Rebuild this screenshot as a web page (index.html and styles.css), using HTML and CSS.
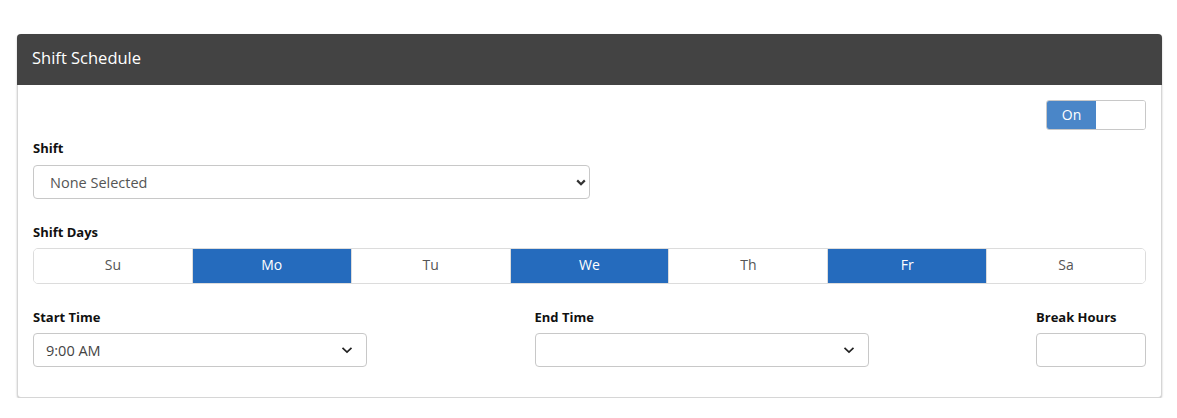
FILE: index.html
```html
<!DOCTYPE html>
<html lang="en">
<head>
    <meta charset="UTF-8">
    <meta name="viewport" content="width=device-width, initial-scale=1.0">
    <title>Shift Schedule</title>
    <link rel="stylesheet" href="styles.css">
</head>
<body>
<div class="card">
    <div class="card-header">Shift Schedule</div>
    <div class="card-body">
        <!-- on / off toggle -->
        <div class="toggle-row">
            <div class="toggle">
                <span class="toggle-on">On</span>
                <span class="toggle-off"></span>
            </div>
        </div>

        <label class="field-label">Shift</label>
        <div class="select-wrap shift-select">
            <select class="form-select">
                <option>None Selected</option>
            </select>
            <svg class="caret caret-bold" width="10" height="7" viewBox="0 0 10 7"><path d="M1.2 1.4 L5 5.2 L8.8 1.4" fill="none" stroke="#333" stroke-width="2.2"/></svg>
        </div>

        <label class="field-label days-label">Shift Days</label>
        <div class="days">
            <button class="day">Su</button>
            <button class="day active">Mo</button>
            <button class="day">Tu</button>
            <button class="day active">We</button>
            <button class="day">Th</button>
            <button class="day active">Fr</button>
            <button class="day">Sa</button>
        </div>

        <div class="time-row">
            <div class="time-col">
                <label class="field-label">Start Time</label>
                <div class="select-wrap">
                    <select class="form-select time-select">
                        <option>9:00 AM</option>
                    </select>
                    <svg class="caret" width="12" height="8" viewBox="0 0 12 8"><path d="M1.5 1.8 L6 6 L10.5 1.8" fill="none" stroke="#222" stroke-width="1.7"/></svg>
                </div>
            </div>
            <div class="time-col">
                <label class="field-label">End Time</label>
                <div class="select-wrap">
                    <select class="form-select time-select">
                        <option></option>
                    </select>
                    <svg class="caret" width="12" height="8" viewBox="0 0 12 8"><path d="M1.5 1.8 L6 6 L10.5 1.8" fill="none" stroke="#222" stroke-width="1.7"/></svg>
                </div>
            </div>
            <div class="break-col">
                <label class="field-label">Break Hours</label>
                <input type="text" class="form-input">
            </div>
        </div>
    </div>
</div>
</body>
</html>
```

FILE: styles.css
```css
body {
    margin: 0;
    padding: 34px 15px 0 17px;
    background-color: #fff;
    font-family: "Open Sans", Arial, sans-serif;
    color: #222;
}

.card {
    border: 1px solid #d6d6d6;
    border-top: none;
    border-radius: 4px;
    box-shadow: 0 1px 2px rgba(0, 0, 0, 0.25);
    background: #fff;
}

.card-header {
    height: 51px;
    line-height: 47px;
    background-color: #434343;
    color: #fff;
    font-size: 16.5px;
    padding: 0 15px;
    border-radius: 4px 4px 0 0;
    margin: 0 -1px;
}

.card-body {
    padding: 15px 15px 30px 15px;
}

.toggle-row {
    display: flex;
    justify-content: flex-end;
    height: 30px;
    margin-bottom: 8px;
}

.toggle {
    display: flex;
    width: 98px;
    height: 28px;
    border: 1px solid #c8c8c8;
    border-radius: 3px;
    overflow: hidden;
}

.toggle-on {
    width: 49px;
    background-color: #4a86c8;
    color: #fff;
    font-size: 14px;
    text-align: center;
    line-height: 28px;
}

.toggle-off {
    flex: 1;
    background: #fff;
}

.field-label {
    display: block;
    font-size: 13px;
    font-weight: 700;
    color: #111;
    line-height: 20px;
    margin-bottom: 7px;
    margin-top: 1px;
}

.days-label {
    margin-top: 23px;
    margin-bottom: 6px;
}

.select-wrap {
    position: relative;
}

.shift-select {
    width: 557px;
}

.form-select {
    appearance: none;
    -webkit-appearance: none;
    display: block;
    width: 100%;
    height: 34px;
    border: 1px solid #c8c8c8;
    border-radius: 4px;
    background: #fff;
    color: #555;
    font-family: inherit;
    font-size: 14.5px;
    padding: 0 16px;
    outline: none;
}

.time-select {
    padding: 0 12px;
    color: #444;
}

.caret {
    position: absolute;
    top: 14px;
    right: 4px;
    pointer-events: none;
}

.select-wrap .caret:not(.caret-bold) {
    right: 14px;
    top: 13px;
}

.days {
    box-sizing: border-box;
    display: flex;
    height: 36px;
    border: 1px solid #dcdcdc;
    border-radius: 5px;
    overflow: hidden;
}

.day {
    flex: 1;
    border: none;
    border-left: 1px solid #dcdcdc;
    background: #fff;
    color: #555;
    font-family: inherit;
    font-size: 14px;
    padding: 0 0 3px 0;
}

.day:first-child {
    border-left: none;
}

.day.active {
    background-color: #256bbd;
    color: #fff;
}

.time-row {
    display: flex;
    justify-content: space-between;
    margin-top: 22px;
}

.time-row .field-label {
    margin-bottom: 6px;
}

.time-col {
    width: 334px;
}

.break-col {
    width: 110px;
}

.form-input {
    display: block;
    box-sizing: border-box;
    width: 100%;
    height: 34px;
    border: 1px solid #c8c8c8;
    border-radius: 4px;
    outline: none;
}
```
